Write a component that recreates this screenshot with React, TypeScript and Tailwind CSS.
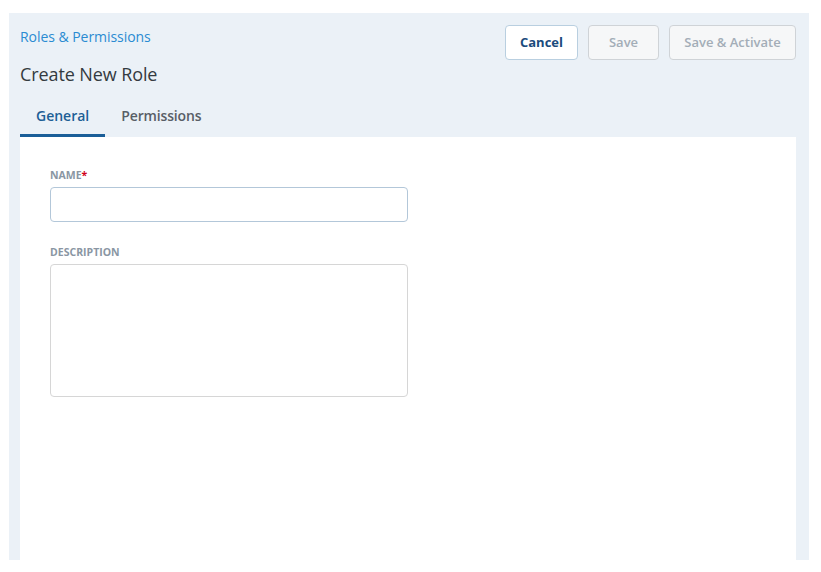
import React, { useState } from 'react';

const App = () => {
  const [tab, setTab] = useState<'general' | 'permissions'>('general');
  const [name, setName] = useState('');
  const [description, setDescription] = useState('');

  return (
    <div className="min-h-screen bg-white pt-[13px] pl-[9px] font-['Open_Sans',sans-serif]">
      <div className="w-[800px] h-[547px] bg-[#ebf1f7] pt-[12px] pl-[11px] pr-[13px] flex flex-col">
        {/* Header */}
        <div className="flex justify-between items-start">
          <div>
            <a className="block mt-[2px] h-[20px] leading-[20px] text-[14px] tracking-[-0.05px] text-[#2a8bd2] cursor-pointer">
              Roles &amp; Permissions
            </a>
            <h1 className="mt-[14px] h-[26px] leading-[26px] text-[18px] tracking-[-0.1px] text-[#333a40]">
              Create New Role
            </h1>
          </div>
          <div className="flex gap-[10px]">
            <button className="h-[35px] w-[73px] rounded-[4px] border border-[#b9cfe0] bg-white text-[13px] font-bold text-[#1b4b7c]">
              Cancel
            </button>
            <button
              disabled
              className="h-[35px] w-[71px] rounded-[4px] border border-[#cfd3d7] bg-[#f6f7f8] text-[13px] font-semibold text-[#a3adb7]"
            >
              Save
            </button>
            <button
              disabled
              className="h-[35px] w-[127px] rounded-[4px] border border-[#cfd3d7] bg-[#f6f7f8] text-[13px] font-semibold text-[#a3adb7]"
            >
              Save &amp; Activate
            </button>
          </div>
        </div>

        {/* Tabs */}
        <div className="mt-[10px] flex h-[40px]">
          <button
            onClick={() => setTab('general')}
            className={`px-[16px] h-full text-[14px] font-semibold border-b-[3px] ${
              tab === 'general' ? 'text-[#1d5f96] border-[#1a5e98]' : 'text-[#585e66] border-transparent'
            }`}
          >
            General
          </button>
          <button
            onClick={() => setTab('permissions')}
            className={`px-[16px] h-full text-[14px] tracking-[-0.15px] font-semibold border-b-[3px] ${
              tab === 'permissions' ? 'text-[#1d5f96] border-[#1a5e98]' : 'text-[#585e66] border-transparent'
            }`}
          >
            Permissions
          </button>
        </div>

        {/* Card */}
        <div className="flex-1 bg-white pt-[32px] pl-[30px]">
          {tab === 'general' && (
            <div className="w-[358px]">
              <label className="block h-[12px] leading-[12px] text-[10.5px] font-bold uppercase text-[#8a96a3]">
                Name<span className="text-[#d0021b]">*</span>
              </label>
              <input
                value={name}
                onChange={(e) => setName(e.target.value)}
                className="mt-[6px] block w-full h-[35px] rounded-[4px] border-[1.5px] border-[#b3c7d9] outline-none px-2 text-[13px]"
              />
              <label className="mt-[24px] block h-[12px] leading-[12px] text-[10.5px] font-bold uppercase text-[#8a96a3]">
                Description
              </label>
              <textarea
                value={description}
                onChange={(e) => setDescription(e.target.value)}
                className="mt-[6px] block w-full h-[133px] resize-none rounded-[4px] border-[1.5px] border-[#d6d6d6] outline-none px-2 py-1 text-[13px]"
              />
            </div>
          )}
        </div>
      </div>
    </div>
  );
};

export default App;
